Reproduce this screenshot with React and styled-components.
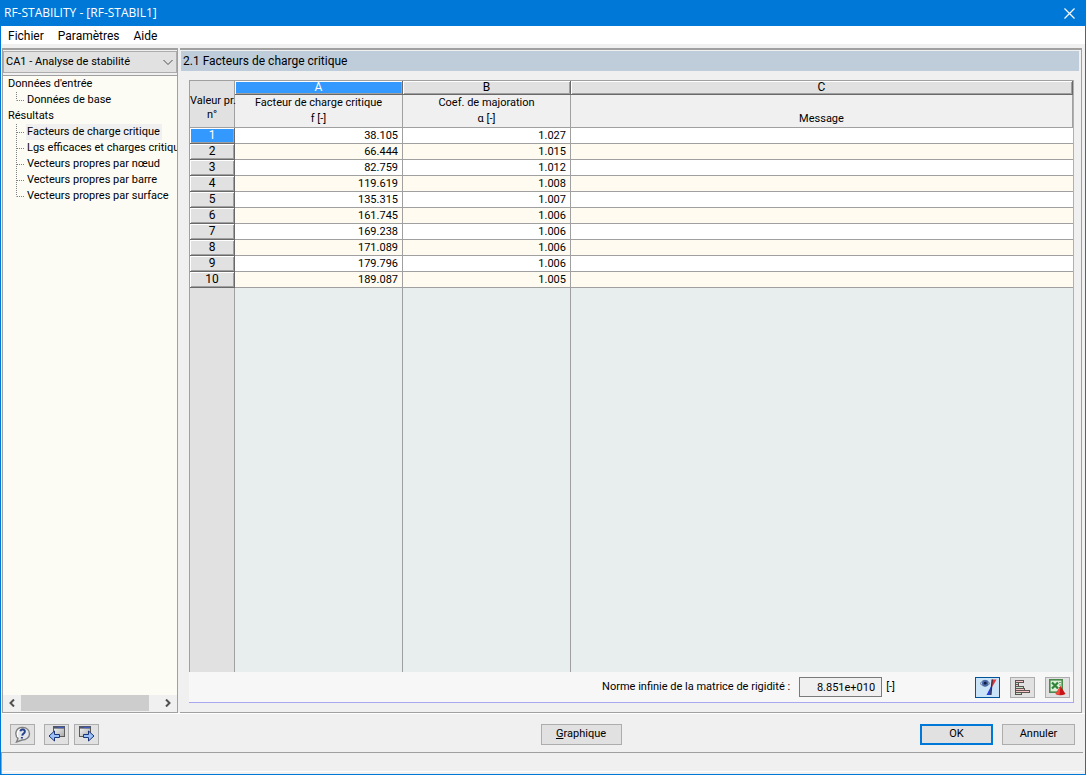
import React, { useState } from "react";
import styled, { createGlobalStyle } from "styled-components";

const GlobalStyle = createGlobalStyle`
  * {
    box-sizing: border-box;
  }
  body {
    margin: 0;
    color: #000;
    font-family: Roboto, Arial, sans-serif;
    font-size: 11px;
    line-height: 16px;
  }
  button, select, input {
    margin: 0;
    color: inherit;
    font: inherit;
  }
`;

const Window = styled.div`
  display: flex;
  flex-direction: column;
  height: 100vh;
  min-height: 480px;
  border: 1px solid #0078d7;
  background: #f0f0f0;
`;

const TitleBar = styled.header`
  display: flex;
  align-items: center;
  justify-content: space-between;
  height: 24px;
  margin-bottom: 1px;
  padding: 0 8px 0 3px;
  background: #0078d7;
  box-shadow: 0 1px #0078d7;
  color: #fff;
`;

const Title = styled.h1`
  margin: 0;
  font-family: "Open Sans", sans-serif;
  font-size: 12px;
  font-weight: 400;
`;

const CloseButton = styled.button`
  display: flex;
  padding: 2px;
  border: 0;
  background: none;
`;

const MenuBar = styled.nav`
  display: flex;
  gap: 14px;
  height: 18px;
  padding: 0 7px;
  background: #fff;
  font-size: 12px;
  line-height: 20px;

  a {
    color: inherit;
    text-decoration: none;
  }
`;

const Main = styled.main`
  display: flex;
  flex: 1;
  gap: 2px;
  min-height: 0;
  margin-top: 4px;
  padding: 0 3px 0 1px;
  border-bottom: 1px solid #fff;
`;

const Sidebar = styled.aside`
  display: flex;
  flex-direction: column;
  flex: none;
  width: 176px;
  border: 1px solid #a0a0a0;
  border-top-width: 2px;
`;

const CaseField = styled.div`
  position: relative;
  margin: 1px 0 2px;
`;

const CaseSelect = styled.select`
  display: block;
  width: 100%;
  height: 22px;
  padding: 0 2px;
  appearance: none;
  border: 1px solid #adadad;
  border-radius: 0;
  background: #e1e1e1;
`;

const SelectArrow = styled.svg`
  position: absolute;
  top: 8px;
  right: 4px;
  pointer-events: none;
`;

const Tree = styled.div`
  flex: 1;
  min-height: 0;
  overflow: hidden;
  border-top: 1px solid #a0a0a0;
  background: #fcfcf4;
  white-space: nowrap;
`;

const TreeGroup = styled.div`
  padding-left: 5px;
`;

const TreeList = styled.ul`
  margin: 0;
  padding: 0 0 0 13px;
  list-style: none;
`;

const TreeItem = styled.li`
  display: flex;
  height: 16px;

  svg {
    flex: none;
  }
`;

const TreeLink = styled.a`
  padding: 0 2px 0 1px;
  background: ${(props) => (props.$active ? "#f0f0f0" : "none")};
  color: inherit;
  text-decoration: none;
`;

const ScrollBar = styled.div`
  display: flex;
  height: 17px;
  padding-bottom: 1px;
  background: #f0f0f0;
`;

const ScrollButton = styled.button`
  display: flex;
  align-items: center;
  justify-content: center;
  width: 18px;
  padding: 0;
  border: 0;
  background: none;
`;

const ScrollTrack = styled.div`
  flex: 1;
`;

const ScrollThumb = styled.div`
  width: 93%;
  height: 100%;
  background: #cdcdcd;
`;

const Content = styled.section`
  display: flex;
  flex-direction: column;
  flex: 1;
  min-width: 0;
  border: solid #a0a0a0;
  border-width: 2px 1px 1px 0;
  padding: 1px 2px 9px 1px;
`;

const ContentTitle = styled.h2`
  height: 20px;
  margin: 0;
  padding: 0 2px;
  background: #bfcddb;
  font-size: 12px;
  font-weight: 400;
  line-height: 20px;
`;

const Sheet = styled.div`
  display: flex;
  flex-direction: column;
  flex: 1;
  min-height: 0;
  margin: 9px 5px 0 8px;
  border: solid #a9a7f0;
  border-width: 0 1px 1px 0;
`;

const Table = styled.table`
  width: 100%;
  border-top: 1px solid #a0a0a0;
  border-left: 1px solid #a0a0a0;
  border-spacing: 0;
  table-layout: fixed;

  th, td {
    padding: 0;
    font-weight: 400;
  }
`;

const CornerHead = styled.th`
  border-right: 1px solid #a0a0a0;
  border-bottom: 1px solid #a0a0a0;
  background: #e1e1e1;
  line-height: 14px;
  white-space: nowrap;

  && {
    padding-top: 8px;
  }
`;

const LetterHead = styled.th`
  height: 14px;
  border: solid #696969;
  border-width: 0 1px 1px 0;
  background: ${(props) => (props.$active ? "#3399ff" : "#e1e1e1")};
  box-shadow: inset 1px 1px #fff, inset -1px -1px #a0a0a0;
  color: ${(props) => (props.$active ? "#fff" : "#000")};
  font-size: 12px;
  line-height: 13px;
`;

const NameHead = styled.th`
  height: 33px;
  border: solid #a0a0a0;
  border-width: 0 1px 1px 0;
  background: #f0f0f0;
  line-height: 16px;
  vertical-align: top;
`;

const RowHead = styled.th`
  height: 16px;
  border: solid #696969;
  border-width: 0 1px 1px 0;
  background: ${(props) => (props.$active ? "#3399ff" : "#e1e1e1")};
  box-shadow: inset 1px 1px #fff, inset -1px -1px #a0a0a0;
  color: ${(props) => (props.$active ? "#fff" : "#000")};
  font-size: 12px;
  line-height: 15px;
`;

const Row = styled.tr`
  background: #fff;

  &:nth-child(even) {
    background: #fffbf0;
  }
`;

const Cell = styled.td`
  height: 16px;
  border: solid #a0a0a0;
  border-width: 0 1px 1px 0;
  line-height: 14px;
  text-align: right;

  && {
    padding: 1px 4px 0 0;
  }
  &:last-child {
    border-right: 0;
  }
`;

const EmptyArea = styled.div`
  display: grid;
  flex: 1;
  grid-template-columns: 46px 168px 168px 1fr;
  background: #e8eeee;

  div {
    border-right: 1px solid #a0a0a0;
  }
  div:first-child {
    border-left: 1px solid #a0a0a0;
    background: #e1e1e1;
  }
  div:last-child {
    border-right: 0;
  }
`;

const SheetFooter = styled.div`
  display: flex;
  align-items: center;
  justify-content: flex-end;
  height: 30px;
  padding: 0 3px;
  background: #f7f7f7;
`;

const NormInput = styled.input`
  width: 83px;
  height: 20px;
  margin: 0 4px 0 9px;
  padding: 0 6px;
  border: 1px solid #7a7a7a;
  background: #f0f0f0;
  text-align: right;
`;

const ToolGroup = styled.div`
  display: flex;
  gap: 10px;
  margin-left: 80px;
`;

const IconButton = styled.button`
  display: flex;
  align-items: center;
  justify-content: center;
  width: 25px;
  height: 21px;
  padding: 0;
  border: 1px solid ${(props) => (props.$active ? "#005499" : "#adadad")};
  background: ${(props) => (props.$active ? "#cce4f7" : "#e1e1e1")};
`;

const ActionBar = styled.div`
  display: flex;
  align-items: center;
  height: 38px;
  padding: 2px 10px 0 9px;
`;

const ActionIcons = styled.div`
  display: flex;
  gap: 5px;
  width: calc(50% - 2px);

  button:first-child {
    margin-right: 4px;
  }
`;

const DialogButtons = styled.div`
  display: flex;
  gap: 9px;
  margin-left: auto;
`;

const Button = styled.button`
  width: ${(props) => props.$width || 73}px;
  height: 21px;
  padding: 0;
  border: ${(props) => (props.$primary ? "2px solid #0078d7" : "1px solid #adadad")};
  background: #e1e1e1;
  line-height: 16px;
`;

const StatusBar = styled.footer`
  height: 22px;
  margin-right: 2px;
  border-top: 1px solid #a0a0a0;
  border-left: 1px solid #a0a0a0;
  box-shadow: inset 0 -2px #f0f0f0, inset 0 -3px #fff;
`;

const CloseIcon = () => (
  <svg width="11" height="11" viewBox="0 0 11 11" stroke="#fff" strokeWidth="1.2" fill="none">
    <path d="M.5 .5l10 10M10.5 .5l-10 10" />
  </svg>
);

const Branch = ({ last }) => (
  <svg width="10" height="16" stroke="#808080" strokeDasharray="1 1" fill="none">
    <path d={last ? "M.5 0V8.5" : "M.5 0V16"} />
    <path d="M1 8.5H9" />
  </svg>
);

const Chevron = ({ left }) => (
  <svg width="6" height="8" stroke="#505050" strokeWidth="2" fill="none">
    <path d={left ? "M5 .5L1.5 4L5 7.5" : "M1 .5L4.5 4L1 7.5"} />
  </svg>
);

const EyeIcon = () => (
  <svg width="18" height="18" viewBox="0 0 18 18">
    <path d="M1 5.5Q6 -1 11 5.5Q6 11 1 5.5Z" fill="#c3d0e4" stroke="#7486a6" />
    <circle cx="6.2" cy="5.2" r="3.2" fill="#4668a8" />
    <circle cx="6.2" cy="5.2" r="1.4" fill="#101c40" />
    <path d="M13 1.5H17.5L13.2 9Z" fill="#f03030" />
    <path d="M12.2 8L11.5 17H7.5Z" fill="#2440e0" />
    <path d="M13.2 1.5L11.8 17" stroke="#303040" strokeWidth="1.4" />
  </svg>
);

const BarsIcon = () => (
  <svg width="17" height="17" viewBox="0 0 17 17" stroke="#5c5452">
    <path d="M1.5 1V16" />
    <rect x="1.5" y="1.5" width="8" height="2" fill="#f6c4c4" />
    <rect x="1.5" y="3.5" width="3" height="2" fill="#c4e4c8" />
    <rect x="1.5" y="5.5" width="3" height="2" fill="#f6c4c4" />
    <rect x="1.5" y="7.5" width="8" height="2" fill="#c4e4c8" />
    <rect x="1.5" y="11.5" width="14" height="2" fill="#f6c4c4" />
    <rect x="1.5" y="9.5" width="9" height="2" fill="#f6c4c4" />
    <rect x="1.5" y="13.5" width="6" height="2" fill="#c4e4c8" />
  </svg>
);

const ExcelIcon = () => (
  <svg width="17" height="17" viewBox="0 0 17 17">
    <rect x=".8" y=".8" width="12.4" height="12.4" fill="#dcefd8" stroke="#4c8a4c" strokeWidth="1.6" />
    <path d="M10 3.5H12M10 6H12M10 8.5H12" stroke="#67a768" />
    <path d="M3 3.5L9 9.5M9 3.5L3 9.5" stroke="#2f8438" strokeWidth="2.2" />
    <path d="M11.5 7L16.5 15Q11.5 17.5 6.5 15Z" fill="#c81414" />
    <path d="M11.5 7L10.5 16L6.5 15Z" fill="#f04c40" />
  </svg>
);

const HelpIcon = () => (
  <svg width="17" height="17" viewBox="0 0 17 17">
    <path
      d="M8.5 1.5C13 1.5 15.5 4.5 15.5 8C15.5 11.5 12 14 8 14L2.5 16L4 12.5C.5 9 1 1.5 8.5 1.5Z"
      fill="#e4e6ea"
      stroke="#808080"
      strokeWidth="1.4"
    />
    <path d="M4 11C2.500 7 4.500 4 7 3" fill="none" stroke="#fff" strokeWidth="1.500" />
    <path
      d="M6.3 5.3C7 2.8 11.2 3 10.8 5.8C10.5 7.5 8.5 7.4 8.2 9.6M7.9 11V12.6"
      fill="none"
      stroke="#24418c"
      strokeWidth="2"
    />
  </svg>
);

const WindowArrowIcon = ({ right }) => (
  <svg width="18" height="18" viewBox="0 0 18 18">
    <defs>
      <linearGradient id="pane" x2="1" y2="1">
        <stop offset="0" stopColor="#fafafa" />
        <stop offset="1" stopColor="#a8a8a8" />
      </linearGradient>
    </defs>
    <rect x={right ? 1.5 : 5.5} y="1.5" width="11" height="10" fill="url(#pane)" stroke="#5c5c5c" />
    <rect x={right ? 1 : 5} y="1" width="12" height="2.600" fill="#50566c" />
    <path d={right ? "M6 2.5H12" : "M10 2.5H16"} stroke="#3c5cc0" />
    <path
      d={
        right
          ? "M5.5 9.5H10.5V6L16 11L10.500 16V12.5H5.5Z"
          : "M11.5 9.5H6.5V6L1 11L6.5 16V12.5H11.5Z"
      }
      fill="#9cc0fa"
      stroke="#1c3478"
    />
  </svg>
);

const results = [
  "Facteurs de charge critique",
  "Lgs efficaces et charges critiqu",
  "Vecteurs propres par nœud",
  "Vecteurs propres par barre",
  "Vecteurs propres par surface",
];

const factors = [
  ["38.105", "1.027"],
  ["66.444", "1.015"],
  ["82.759", "1.012"],
  ["119.619", "1.008"],
  ["135.315", "1.007"],
  ["161.745", "1.006"],
  ["169.238", "1.006"],
  ["171.089", "1.006"],
  ["179.796", "1.006"],
  ["189.087", "1.005"],
];

const App = () => {
  const [page, setPage] = useState(0);
  const [row, setRow] = useState(0);

  return (
    <Window>
      <GlobalStyle />
      <TitleBar>
        <Title>RF-STABILITY - [RF-STABIL1]</Title>
        <CloseButton aria-label="Fermer">
          <CloseIcon />
        </CloseButton>
      </TitleBar>
      <MenuBar>
        <a href="#fichier">Fichier</a>
        <a href="#parametres">Paramètres</a>
        <a href="#aide">Aide</a>
      </MenuBar>
      <Main>
        <Sidebar>
          <CaseField>
            <CaseSelect aria-label="Cas">
              <option>CA1 - Analyse de stabilité</option>
            </CaseSelect>
            <SelectArrow width="10" height="7" stroke="#505050" fill="none">
              <path d="M.5 1L5 5.5L9.5 1" />
            </SelectArrow>
          </CaseField>
          <Tree>
            <TreeGroup>Données d'entrée</TreeGroup>
            <TreeList>
              <TreeItem>
                <Branch last />
                <TreeLink href="#base">Données de base</TreeLink>
              </TreeItem>
            </TreeList>
            <TreeGroup>Résultats</TreeGroup>
            <TreeList>
              {results.map((name, i) => (
                <TreeItem key={name}>
                  <Branch last={i === results.length - 1} />
                  <TreeLink
                    href={`#r${i}`}
                    $active={page === i}
                    onClick={() => setPage(i)}
                  >
                    {name}
                  </TreeLink>
                </TreeItem>
              ))}
            </TreeList>
          </Tree>
          <ScrollBar>
            <ScrollButton aria-label="Gauche">
              <Chevron left />
            </ScrollButton>
            <ScrollTrack>
              <ScrollThumb />
            </ScrollTrack>
            <ScrollButton aria-label="Droite">
              <Chevron />
            </ScrollButton>
          </ScrollBar>
        </Sidebar>
        <Content>
          <ContentTitle>2.1 Facteurs de charge critique</ContentTitle>
          <Sheet>
            <Table>
              <colgroup>
                <col style={{ width: 45 }} />
                <col style={{ width: 168 }} />
                <col style={{ width: 168 }} />
                <col />
              </colgroup>
              <thead>
                <tr>
                  <CornerHead rowSpan={2}>
                    Valeur pr.
                    <br />
                    n°
                  </CornerHead>
                  <LetterHead $active>A</LetterHead>
                  <LetterHead>B</LetterHead>
                  <LetterHead>C</LetterHead>
                </tr>
                <tr>
                  <NameHead>
                    Facteur de charge critique
                    <br />f [-]
                  </NameHead>
                  <NameHead>
                    Coef. de majoration
                    <br />α [-]
                  </NameHead>
                  <NameHead>
                    <br />
                    Message
                  </NameHead>
                </tr>
              </thead>
              <tbody>
                {factors.map(([factor, coef], i) => (
                  <Row key={factor} onClick={() => setRow(i)}>
                    <RowHead $active={row === i}>{i + 1}</RowHead>
                    <Cell>{factor}</Cell>
                    <Cell>{coef}</Cell>
                    <Cell />
                  </Row>
                ))}
              </tbody>
            </Table>
            <EmptyArea>
              <div />
              <div />
              <div />
              <div />
            </EmptyArea>
            <SheetFooter>
              <label htmlFor="norm">Norme infinie de la matrice de rigidité :</label>
              <NormInput id="norm" value="8.851e+010" readOnly />
              <span>[-]</span>
              <ToolGroup>
                <IconButton $active aria-label="Vue">
                  <EyeIcon />
                </IconButton>
                <IconButton aria-label="Barres">
                  <BarsIcon />
                </IconButton>
                <IconButton aria-label="Exporter">
                  <ExcelIcon />
                </IconButton>
              </ToolGroup>
            </SheetFooter>
          </Sheet>
        </Content>
      </Main>
      <ActionBar>
        <ActionIcons>
          <IconButton aria-label="Aide">
            <HelpIcon />
          </IconButton>
          <IconButton aria-label="Précédent">
            <WindowArrowIcon />
          </IconButton>
          <IconButton aria-label="Suivant">
            <WindowArrowIcon right />
          </IconButton>
        </ActionIcons>
        <Button $width={81}>
          <u>G</u>raphique
        </Button>
        <DialogButtons>
          <Button $primary>OK</Button>
          <Button>Annuler</Button>
        </DialogButtons>
      </ActionBar>
      <StatusBar />
    </Window>
  );
};

export default App;
